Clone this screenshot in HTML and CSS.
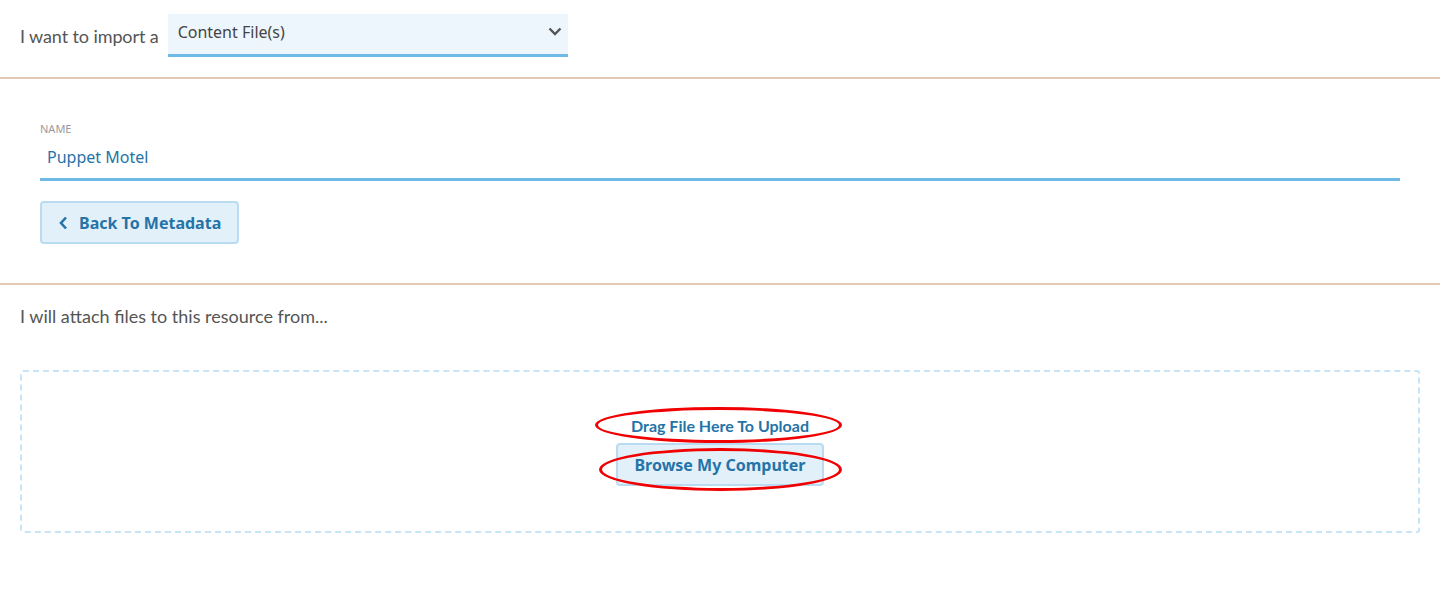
FILE: index.html
```html
<!DOCTYPE html>
<html lang="en">
<head>
<meta charset="utf-8">
<title>Import</title>
<link rel="stylesheet" href="styles.css">
</head>
<body>
<div class="page">
  <section class="import-type">
    <span class="import-label">I want to import a</span>
    <div class="select">
      <span class="select-value">Content File(s)</span>
      <svg class="select-caret" width="14" height="9" viewBox="0 0 14 9"><path d="M1.5 1.5 L7 7 L12.5 1.5" fill="none" stroke="#555" stroke-width="2.4"/></svg>
    </div>
  </section>

  <section class="meta">
    <div class="field">
      <label class="field-label">Name</label>
      <div class="field-input">Puppet Motel</div>
    </div>
    <button class="btn btn-back">
      <svg width="9" height="14" viewBox="0 0 9 14"><path d="M7 1.5 L2 7 L7 12.5" fill="none" stroke="#2573a7" stroke-width="2.6"/></svg>
      <span>Back To Metadata</span>
    </button>
  </section>

  <section class="attach">
    <p class="attach-label">I will attach files to this resource from...</p>
    <div class="dropzone">
      <div class="drop-text mark">Drag File Here To Upload</div>
      <button class="btn btn-browse mark mark-wide">Browse My Computer</button>
    </div>
  </section>
</div>
</body>
</html>
```

FILE: styles.css
```css
* { box-sizing: border-box; }

html, body {
  margin: 0;
  padding: 0;
  background: #fff;
}

body {
  font-family: Lato, "Noto Sans", sans-serif;
  color: #555;
}

.page {
  width: 1440px;
}

.import-type {
  display: flex;
  align-items: center;
  gap: 9px;
  padding: 14px 20px 20px;
  border-bottom: 2px solid #e3c8b3;
}

.import-label {
  font-size: 18px;
  letter-spacing: -0.1px;
  padding-top: 1px;
}

.select {
  width: 400px;
  height: 43px;
  display: flex;
  align-items: center;
  justify-content: space-between;
  padding: 0 6px 0 10px;
  background: #eef6fd;
  border-bottom: 3px solid #6fb9e6;
}

.select-value {
  font-family: "Noto Sans", sans-serif;
  font-size: 16px;
  color: #444;
  margin-top: -4px;
}

.select-caret {
  margin-top: -5px;
}

.meta {
  padding: 42px 40px 39px;
  border-bottom: 2px solid #e3c8b3;
}

.field {
  display: flex;
  flex-direction: column;
}

.field-label {
  font-family: "Noto Sans", sans-serif;
  font-size: 11px;
  text-transform: uppercase;
  color: #9a9a9a;
  line-height: 16px;
}

.field-input {
  width: 1360px;
  padding: 9px 7px 10px;
  font-family: "Noto Sans", sans-serif;
  font-size: 16px;
  line-height: 22px;
  color: #2573a7;
  border-bottom: 3px solid #6fb9e6;
}

.btn {
  font-family: "Noto Sans", sans-serif;
  font-weight: 700;
  font-size: 16px;
  color: #2573a7;
  background: #e2f0fa;
  border: 2px solid #b9dcf3;
  border-radius: 4px;
  cursor: pointer;
}

.btn-back {
  margin-top: 20px;
  height: 43px;
  display: flex;
  align-items: center;
  gap: 11px;
  padding: 0 16px 0 17px;
}

.attach {
  padding: 20px 20px 0;
}

.attach-label {
  margin: 0;
  font-size: 18px;
  line-height: 22px;
}

.dropzone {
  margin-top: 43px;
  width: 1400px;
  height: 163px;
  border: 2px dashed #c8e4f6;
  border-radius: 3px;
  display: flex;
  flex-direction: column;
  align-items: center;
  padding-top: 44px;
  gap: 7px;
}

.drop-text {
  font-family: Lato, sans-serif;
  font-weight: 700;
  font-size: 16px;
  color: #2573a7;
  line-height: 20px;
}

.btn-browse {
  height: 43px;
  padding: 0 16px;
  border-width: 2px;
}

/* red ring drawn around highlighted items */
.mark {
  position: relative;
}

.mark::after {
  content: "";
  position: absolute;
  left: -36px;
  right: -33px;
  top: -9px;
  bottom: -7px;
  border: 3.5px solid #f00000;
  border-radius: 50%;
  pointer-events: none;
}

.mark-wide::after {
  left: -19px;
  right: -20px;
  top: 3px;
  bottom: -7px;
}
```
